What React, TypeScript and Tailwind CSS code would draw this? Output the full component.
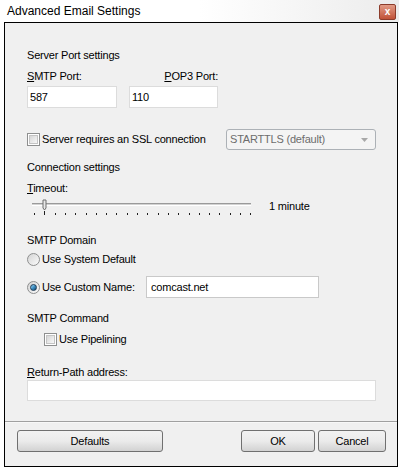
import React from 'react';

const ticks = Array.from({ length: 22 }, (_, i) => 2 + i * 10.3);

function Checkbox() {
  return (
    <span className="w-[13px] h-[13px] shrink-0 border border-[#8e8f8f] bg-white p-[1px]">
      <span className="block w-full h-full bg-gradient-to-br from-[#d6d6d6] to-[#f8f8f8] border border-[#c4c4c4]" />
    </span>
  );
}

function Radio({ checked }: { checked?: boolean }) {
  return (
    <span className="w-[13px] h-[13px] shrink-0 rounded-full border border-[#8e8f8f] bg-gradient-to-br from-[#d4d4d4] to-[#fbfbfb] flex items-center justify-center">
      {checked && (
        <span className="w-[7px] h-[7px] rounded-full border border-[#1b3a55] bg-gradient-to-br from-[#9fdcf8] via-[#3d8fc4] to-[#154a70]" />
      )}
    </span>
  );
}

function Button({ label, w }: { label: string; w: string }) {
  return (
    <button
      className={`${w} h-[22px] rounded-[3px] border border-[#707070] bg-gradient-to-b from-[#f2f2f2] via-[#ebebeb] to-[#d2d2d2] text-[11px] text-black leading-none`}
    >
      {label}
    </button>
  );
}

export default function App() {
  return (
    <div className="w-[399px] h-[468px] bg-white text-black text-[11px] tracking-[-0.2px] font-['Liberation_Sans',Arial,sans-serif]">
      {/* title bar */}
      <div className="h-[22px] flex items-center justify-between pl-[7px] pr-[3px] bg-gradient-to-r from-white via-white to-[#ececec]">
        <span className="text-[12px] leading-none tracking-normal">Advanced Email Settings</span>
        <span className="w-[17px] h-[16px] mt-[2px] rounded-[2px] border border-[#8c3c2b] bg-gradient-to-b from-[#e29b86] to-[#c05137] flex items-center justify-center text-white text-[10px] font-bold leading-none">
          x
        </span>
      </div>

      {/* frame */}
      <div className="ml-[4px] w-[394px] h-[445px] border border-black bg-[#f0f0f0] flex flex-col">
        <div className="pl-[22px] pr-[21px] flex flex-col">
          <div className="mt-[25px] h-[14px] leading-[14px]">Server Port settings</div>

          <div className="mt-[7px] flex">
            <div className="w-[90px] flex flex-col">
              <div className="h-[14px] leading-[14px]"><u>S</u>MTP Port:</div>
              <div className="mt-[3px] h-[22px] bg-white border border-[#dcdcdc] pl-[2px] flex items-center">587</div>
            </div>
            <div className="ml-[12px] w-[89px] flex flex-col">
              <div className="h-[14px] leading-[14px] text-right"><u>P</u>OP3 Port:</div>
              <div className="mt-[3px] h-[22px] bg-white border border-[#dcdcdc] pl-[2px] flex items-center">110</div>
            </div>
          </div>

          <div className="mt-[21px] h-[21px] flex items-center">
            <Checkbox />
            <span className="ml-[2px]">Server requires an SSL connection</span>
            <div className="ml-auto w-[150px] h-[21px] rounded-[3px] border border-[#acb1b6] bg-[#f4f4f4] flex items-center pl-[3px] pr-[7px] text-[#6d6d6d]">
              <span>STARTTLS (default)</span>
              <svg className="ml-auto" width="7" height="4" viewBox="0 0 7 4">
                <path d="M0 0h7L3.5 4z" fill="#a8a8a8" />
              </svg>
            </div>
          </div>

          <div className="mt-[10px] h-[14px] leading-[14px]">Connection settings</div>
          <div className="mt-[7px] h-[14px] leading-[14px]"><u>T</u>imeout:</div>

          <div className="mt-[2px] h-[19px] flex items-center">
            <svg className="ml-[5px]" width="220" height="19" viewBox="0 0 220 19">
              <rect x="0" y="6" width="219" height="1" fill="#9a9a9a" />
              <rect x="0" y="7" width="219" height="1" fill="#d2d2d2" />
              <rect x="0" y="8" width="219" height="1" fill="#ffffff" />
              {ticks.map((x, i) => (
                <rect key={i} x={Math.round(x)} y={i === 1 ? 14 : 16} width="1" height={i === 1 ? 4 : 2} fill="#202020" />
              ))}
              <path d="M11 3h3v8l-1.5 2L11 11z" fill="#e8e8e8" stroke="#6e6e6e" strokeWidth="1" />
            </svg>
            <span className="ml-[17px]">1 minute</span>
          </div>

          <div className="mt-[17px] h-[14px] leading-[14px]">SMTP Domain</div>
          <div className="mt-[5px] h-[14px] flex items-center">
            <Radio />
            <span className="ml-[2px]">Use System Default</span>
          </div>
          <div className="mt-[10px] h-[22px] flex items-center">
            <div className="w-[119px] flex items-center">
              <Radio checked />
              <span className="ml-[2px]">Use Custom Name:</span>
            </div>
            <div className="w-[173px] h-[22px] bg-white border border-[#c9c9c9] pl-[4px] flex items-center">comcast.net</div>
          </div>

          <div className="mt-[13px] h-[14px] leading-[14px]">SMTP Command</div>
          <div className="mt-[7px] h-[14px] flex items-center pl-[17px]">
            <Checkbox />
            <span className="ml-[2px]">Use Pipelining</span>
          </div>

          <div className="mt-[19px] h-[14px] leading-[14px]"><u>R</u>eturn-Path address:</div>
          <div className="mt-[1px] h-[21px] bg-white border border-[#dcdcdc]" />
        </div>

        <div className="mt-[20px] h-[1px] bg-[#a0a0a0]" />
        <div className="h-[1px] bg-[#f8f8f8]" />

        <div className="mt-[7px] pl-[12px] pr-[11px] flex">
          <Button label="Defaults" w="w-[146px]" />
          <div className="ml-auto flex gap-[3px]">
            <Button label="OK" w="w-[74px]" />
            <Button label="Cancel" w="w-[68px]" />
          </div>
        </div>
      </div>
    </div>
  );
}
